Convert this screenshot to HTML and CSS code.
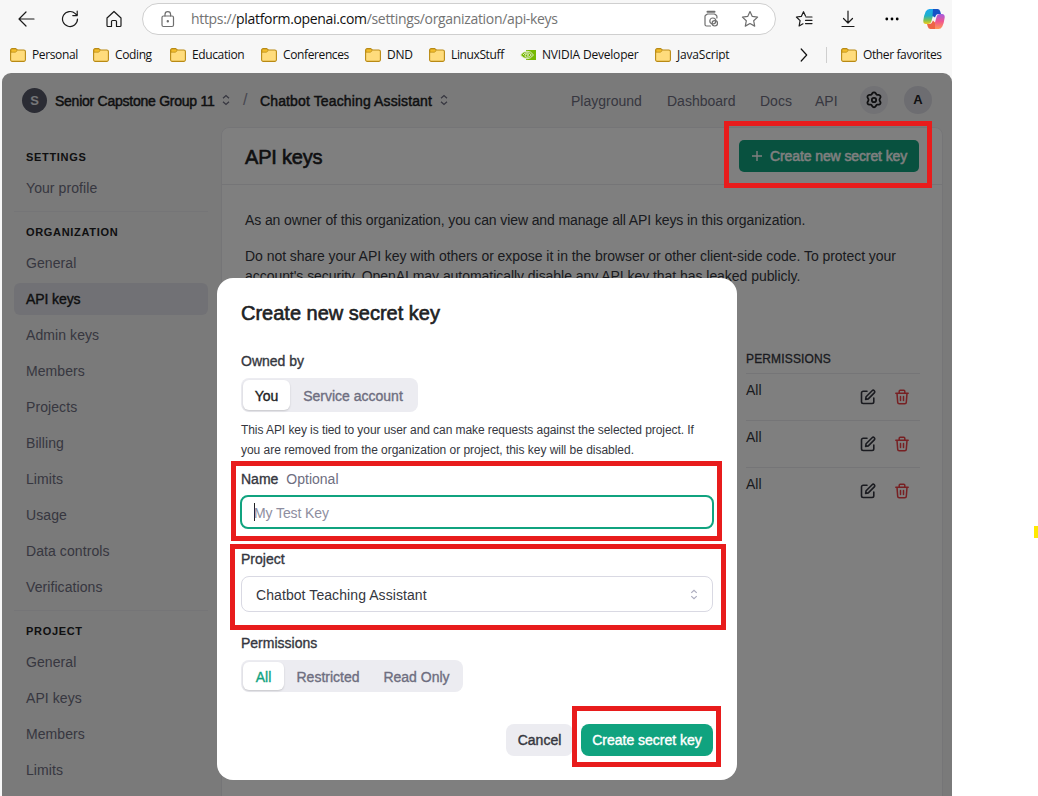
FILE: index.html
```html
<!DOCTYPE html>
<html lang="en">
<head>
<meta charset="utf-8">
<title>API keys</title>
<link rel="stylesheet" href="styles.css">
</head>
<body>
<svg class="defs" width="0" height="0">
  <defs>
    <symbol id="folder" viewBox="0 0 16 16"><path d="M.6 3.200a1.600 1.600 0 0 1 1.600-1.600h3.300l2 1.400h6.300a1.600 1.600 0 0 1 1.600 1.600v8.200a1.600 1.600 0 0 1-1.600 1.600H2.200a1.600 1.600 0 0 1-1.600-1.600z" fill="#ffdc7c" stroke="#b98a14" stroke-width="1.100"/><path d="M1 5.200V3.200q0-1.200 1.200-1.200h3.200l1.700 1.700-1.500 1.500z" fill="#f3bd2c" stroke="#b98a14" stroke-width=".7"/></symbol>
    <symbol id="updown" viewBox="0 0 10 14"><path d="M1.500 5 5 1.800 8.500 5M1.500 9 5 12.200 8.500 9" fill="none" stroke="currentColor" stroke-width="1.500"/></symbol>
    <symbol id="edit" viewBox="0 0 16 16"><path d="M7 2.200H3.200a1.700 1.700 0 0 0-1.700 1.700v8.900a1.700 1.700 0 0 0 1.700 1.700h8.900a1.700 1.700 0 0 0 1.700-1.700V9M5.600 10.400l.5-2.700 6-6a1.500 1.500 0 0 1 2.200 2.200l-6 6z" fill="none" stroke="currentColor" stroke-width="1.600" stroke-linecap="round" stroke-linejoin="round"/></symbol>
    <symbol id="trash" viewBox="0 0 16 16"><path d="M1.800 4.200h12.400M5.200 4V2.300a1 1 0 0 1 1-1h3.600a1 1 0 0 1 1 1V4M3 4.400l.7 9a1.500 1.500 0 0 0 1.500 1.400h5.600a1.500 1.500 0 0 0 1.500-1.400l.7-9M6.500 7.500v4M9.500 7.500v4" fill="none" stroke="currentColor" stroke-width="1.500" stroke-linecap="round"/></symbol>
  </defs>
</svg>
<div class="browser">
  <div class="toolbar">
    <svg class="ic back" viewBox="0 0 18 18"><path d="M17 9H2M9 2 2 9l7 7"/></svg>
    <svg class="ic reload" viewBox="0 0 18 18"><path d="M16.500 9a7.500 7.500 0 1 1-2.200-5.300L16 5.400M16.200 1.200v4.400h-4.400"/></svg>
    <svg class="ic home" viewBox="0 0 18 18"><path d="M2 8 9 1.500 16 8v7.500a1 1 0 0 1-1 1h-3.500v-5a1 1 0 0 0-1-1h-3a1 1 0 0 0-1 1v5H3a1 1 0 0 1-1-1z"/></svg>
    <div class="address">
      <svg class="ic lock" viewBox="0 0 14 17"><rect x="1" y="5" width="11.500" height="10.500" rx="1.500"/><path d="M4 5V3.500a2.800 2.800 0 0 1 5.600 0V5"/><circle cx="6.800" cy="10.300" r=".6" fill="currentColor"/></svg>
      <span class="url">https://<b>platform.openai.com</b>/settings/organization/api-keys</span>
      <svg class="ic tag" viewBox="0 0 16 18"><path d="M7.500 16H3.500A1.500 1.500 0 0 1 2 14.500v-8a1.500 1.500 0 0 1 .6-1.200L4.500 4h7l1.800 1.300a1.500 1.500 0 0 1 .6 1.200V8"/><path d="M4.500 1.800h7" stroke-width="2"/><circle cx="9.800" cy="11" r="3"/><circle cx="11.800" cy="13.300" r="2.700"/></svg>
      <svg class="ic star" viewBox="0 0 18 18"><path d="m9 1.500 2.300 4.900 5.300.7-3.900 3.700 1 5.300L9 13.500l-4.700 2.600 1-5.300L1.400 7.100l5.300-.7z"/></svg>
    </div>
    <svg class="ic favs" viewBox="0 0 18 18"><path d="M10.500 5.900 8.500 1.700 6.300 6.400 1.400 7l3.700 3.700-1 5.300L8 13.800M11 7h6M10.500 10.300H17M10.500 13.600H17"/></svg>
    <svg class="ic download" viewBox="0 0 14 18"><path d="M7 1v12M2.500 8.500 7 13l4.500-4.500M1 16.500h12"/></svg>
    <svg class="dots" viewBox="0 0 14 4"><circle cx="1.800" cy="2" r="1.400"/><circle cx="7" cy="2" r="1.400"/><circle cx="12.200" cy="2" r="1.400"/></svg>
    <svg class="copilot" viewBox="0 0 22 20">
      <defs>
        <linearGradient id="cool" x1="0" y1="0" x2="0" y2="1"><stop offset="0" stop-color="#1ba8f0"/><stop offset=".45" stop-color="#1fb0c8"/><stop offset=".75" stop-color="#7fc254"/><stop offset="1" stop-color="#f4ca19"/></linearGradient>
        <linearGradient id="warm" x1="0" y1="0" x2="0" y2="1"><stop offset="0" stop-color="#a35be0"/><stop offset=".5" stop-color="#f0568f"/><stop offset="1" stop-color="#ff9a55"/></linearGradient>
      </defs>
      <path d="M6.500 0H14Q11.600.8 10.700 4L8.500 12Q7.700 15 5 15H3Q0 15 .3 11.500 1 6 2.700 2.500 4 0 6.500 0z" fill="url(#cool)"/>
      <path d="M10 0h4.500q2 0 2.700 2.200L18 5h-2.700q-2 0-2.700 2L12 8.500 9.500 7z" fill="#1652c5"/>
      <path d="M15.500 20H8q2.400-.8 3.300-4l2.200-8q.8-3 3.500-3h2q3 0 2.700 3.500-.7 5.500-2.400 9-1.300 2.500-3.800 2.500z" fill="url(#warm)"/>
      <path d="M12 20H7.500q-2 0-2.700-2.200L4 15h2.500q2 0 2.700-2l.8-1.500 2 2z" fill="#ed6545"/>
    </svg>
  </div>
  <div class="bookmarks">
    <span class="bm"><svg><use href="#folder"/></svg>Personal</span>
    <span class="bm"><svg><use href="#folder"/></svg>Coding</span>
    <span class="bm"><svg><use href="#folder"/></svg>Education</span>
    <span class="bm"><svg><use href="#folder"/></svg>Conferences</span>
    <span class="bm wide"><svg><use href="#folder"/></svg>DND</span>
    <span class="bm"><svg><use href="#folder"/></svg>LinuxStuff</span>
    <span class="bm wide"><svg viewBox="0 0 16 16"><path d="M6 3h10v10H6z" fill="#76b900"/><path d="M.5 8Q3 4.200 7 4.200T13.500 8Q10.500 11.800 7 11.800T.5 8z" fill="#76b900" stroke="#f7f7f7" stroke-width=".8"/><path d="M3 8q1.500-2.300 4-2.300T11.300 8Q9.500 10.300 7 10.300T5 8q.7-1 2-1t1.800 1q-.8 1-1.800.8" fill="none" stroke="#f7f7f7" stroke-width=".8"/></svg>NVIDIA Developer</span>
    <span class="bm wide"><svg><use href="#folder"/></svg>JavaScript</span>
    <svg class="ic more" viewBox="0 0 8 14"><path d="m1.200 1 5.500 6-5.500 6"/></svg>
    <span class="bm other"><svg><use href="#folder"/></svg>Other favorites</span>
  </div>
  <div class="page">
    <header class="top">
      <span class="org-badge">S</span>
      <span class="crumb">Senior Capstone Group 11</span>
      <svg class="ud"><use href="#updown"/></svg>
      <span class="slash">/</span>
      <span class="crumb proj">Chatbot Teaching Assistant</span>
      <svg class="ud"><use href="#updown"/></svg>
      <nav class="nav"><span class="n1">Playground</span><span class="n2">Dashboard</span><span class="n3">Docs</span><span>API</span></nav>
      <span class="round gear"><svg viewBox="0 0 20 20"><path d="M8.300 2.500a2 2 0 0 1 3.400 0l.6 1a1.200 1.200 0 0 0 1.100.6h1.200a2 2 0 0 1 1.700 3l-.6 1a1.900 1.900 0 0 0 0 1.800l.6 1a2 2 0 0 1-1.700 3h-1.200a1.200 1.200 0 0 0-1.100.6l-.6 1a2 2 0 0 1-3.400 0l-.6-1a1.200 1.200 0 0 0-1.100-.6H5.400a2 2 0 0 1-1.700-3l.6-1a1.900 1.900 0 0 0 0-1.800l-.6-1a2 2 0 0 1 1.700-3h1.200a1.200 1.200 0 0 0 1.100-.6z" transform="translate(0 .8)"/><circle cx="10" cy="10" r="2.200"/></svg></span>
      <span class="round user">A</span>
    </header>
    <div class="body">
      <aside class="side">
        <h3>SETTINGS</h3>
        <a>Your profile</a>
        <h3 class="rule">ORGANIZATION</h3>
        <a>General</a><a class="on">API keys</a><a>Admin keys</a><a>Members</a><a>Projects</a><a>Billing</a><a>Limits</a><a>Usage</a><a>Data controls</a><a>Verifications</a>
        <h3 class="rule">PROJECT</h3>
        <a>General</a><a>API keys</a><a>Members</a><a>Limits</a>
      </aside>
      <main class="card">
        <div class="card-head">
          <h1>API keys</h1>
          <span class="new-key"><svg viewBox="0 0 12 12"><path d="M6 1v10M1 6h10"/></svg>Create new secret key</span>
        </div>
        <p class="p1">As an owner of this organization, you can view and manage all API keys in this organization.</p>
        <p class="p2">Do not share your API key with others or expose it in the browser or other client-side code. To protect your<br>account's security, OpenAI may automatically disable any API key that has leaked publicly.</p>
        <div class="table">
          <div class="th">PERMISSIONS</div>
          <div class="tr"><span>All</span><svg><use href="#edit"/></svg><svg class="del"><use href="#trash"/></svg></div>
          <div class="tr"><span>All</span><svg><use href="#edit"/></svg><svg class="del"><use href="#trash"/></svg></div>
          <div class="tr"><span>All</span><svg><use href="#edit"/></svg><svg class="del"><use href="#trash"/></svg></div>
        </div>
      </main>
    </div>
    <div class="scrim"></div>
  </div>
</div>

<section class="modal">
  <h2>Create new secret key</h2>
  <div class="label">Owned by</div>
  <div class="seg owner"><span class="sel">You</span><span>Service account</span></div>
  <p class="hint"><span class="lead">This API key is tied to your user and can make requests against the selected project. If</span><br>you are removed from the organization or project, this key will be disabled.</p>
  <div class="label name">Name<span>Optional</span></div>
  <div class="input">My Test Key</div>
  <div class="label project">Project</div>
  <div class="select">Chatbot Teaching Assistant<svg><use href="#updown"/></svg></div>
  <div class="label perms">Permissions</div>
  <div class="seg perm"><span class="sel">All</span><span>Restricted</span><span>Read Only</span></div>
  <div class="actions"><span class="btn">Cancel</span><span class="btn go">Create secret key</span></div>
</section>

<div class="mark m1"></div>
<div class="mark m2"></div>
<div class="mark m3"></div>
<div class="mark m4"></div>
<div class="fleck"></div>
</body>
</html>
```
FILE: styles.css
```css
* { box-sizing: border-box; }
body {
  margin: 0; width: 1038px; height: 796px; overflow: hidden; position: relative;
  background: #fff; font: 14px/20px "Liberation Sans", Arial, sans-serif; color: #353740;
}
svg { display: block; flex: none; }
.defs { position: absolute; }
h1, h2, h3, p { margin: 0; font-weight: 400; }
.browser { width: 952px; height: 796px; background: #f7f7f7; display: flex; flex-direction: column; }

.toolbar { height: 38px; display: flex; align-items: center; padding-left: 17px; flex: none; color: #1b1b1b; }
.ic { fill: none; stroke: currentColor; stroke-width: 1.2; stroke-linecap: round; stroke-linejoin: round; }
.back, .reload, .home { width: 18px; height: 18px; }
.reload { margin-left: 26px; }
.home { margin-left: 26px; }
.address {
  width: 634px; height: 32px; margin-left: 19px; border: 1px solid #cfcfcf; border-radius: 16px;
  background: #fff; display: flex; align-items: center; padding-left: 18px; color: #6e6e6e;
}
.lock { width: 14px; height: 17px; }
.url { width: 511px; margin-left: 16px; font: 14px/20px "Open Sans", sans-serif; letter-spacing: -.33px; color: #737373; white-space: nowrap; }
.url b { font-weight: 400; color: #111; }
.tag { width: 16px; height: 18px; margin-left: 1px; }
.star { width: 18px; height: 18px; margin-left: 22px; }
.favs { width: 18px; height: 18px; margin-left: 19px; }
.download { width: 14px; height: 18px; margin-left: 28px; }
.dots { width: 14px; height: 4px; margin-left: 30px; }
.copilot { width: 22px; height: 20px; margin-left: 24px; }

.bookmarks {
  height: 35px; flex: none; display: grid; align-items: center; padding: 0 0 1px 10px; color: #111;
  grid-template-columns: 83px 77px 91px 104px 64px 91px 135px 145px 26px auto;
}
.bm { display: flex; align-items: center; gap: 6px; font: 12px/16px "Open Sans", sans-serif; letter-spacing: -.38px; white-space: nowrap; }
.bm.wide { letter-spacing: -.2px; }
.bm svg { width: 16px; height: 16px; }
.more { width: 8px; height: 14px; }
.other { border-left: 1px solid #cfcfcf; padding-left: 14px; }

.page { position: relative; flex: 1; margin-left: 2px; background: #f4f4f4; border-radius: 9px 9px 0 0; overflow: hidden; }
.scrim { position: absolute; inset: 0; background: rgba(0, 0, 0, .5); }
.top { height: 54px; display: flex; align-items: center; padding-left: 20px; white-space: nowrap; color: #202123; }
.org-badge { width: 25px; height: 25px; border-radius: 50%; background: #565869; color: #ececf1; text-align: center; font: bold 13px/25px "Liberation Sans", sans-serif; }
.crumb { width: 164px; margin-left: 8px; -webkit-text-stroke: .45px; letter-spacing: -.25px; padding-top: 2px; }
.proj { width: 176px; margin-left: 12px; letter-spacing: .13px; }
.ud { width: 10px; height: 12px; margin-left: 2px; color: #6e6e80; }
.proj + .ud { margin-left: 3px; }
.slash { width: 5px; margin-left: 12px; color: #8e8ea0; font-size: 16px; }
.nav { display: flex; margin-left: 122px; width: 289px; color: #6e6e80; padding-top: 2px; }
.n1 { width: 96px; }
.n2 { width: 93px; }
.n3 { width: 55px; }
.round { width: 28px; height: 28px; border-radius: 50%; background: #e4e4ea; display: flex; align-items: center; justify-content: center; }
.gear svg { width: 20px; height: 20px; fill: none; stroke: #202123; stroke-width: 1.8; }
.user { margin-left: 16px; background: #dadae2; font: bold 13px/28px "Liberation Sans", sans-serif; }

.body { display: flex; height: 670px; }
.side { width: 219px; padding: 19px 13px 0 12px; display: flex; flex-direction: column; }
.side h3 { font: bold 11px/22px "Liberation Sans", sans-serif; letter-spacing: .68px; color: #202123; padding-left: 12px; margin-bottom: 4px; height: 22px; flex: none; }
.side .rule { border-top: 1px solid #ebebef; margin-top: 3px; padding-top: 9px; height: 32px; }
.side a { height: 32px; line-height: 33px; padding-left: 12px; margin-bottom: 4px; border-radius: 6px; color: #6e6e80; letter-spacing: .08px; flex: none; }
.side .on { background: #e3e3ea; color: #202123; -webkit-text-stroke: .4px; letter-spacing: -.1px; }
.card { width: 722px; height: 800px; background: #fff; border: 1px solid #ebebef; border-radius: 8px 8px 0 0; }
.card-head { height: 57px; border-bottom: 1px solid #ebebef; padding: 0 23px; display: flex; align-items: center; justify-content: space-between; }
h1 { font-size: 20px; line-height: 28px; color: #202123; -webkit-text-stroke: .6px; letter-spacing: -.2px; padding-top: 2px; }
.new-key { width: 180px; height: 32px; border-radius: 5px; background: #10a37f; color: #fff; display: flex; align-items: center; padding-left: 12px; -webkit-text-stroke: .5px; letter-spacing: -.1px; white-space: nowrap; }
.new-key svg { width: 12px; height: 12px; margin-right: 7px; stroke: #fff; stroke-width: 1.4; }
.card p { padding-left: 23px; white-space: nowrap; }
.card .p1 { margin-top: 25px; letter-spacing: -.11px; }
.card .p2 { margin-top: 16px; letter-spacing: -.045px; }
.table { width: 174px; margin: 62px 0 0 524px; }
.th { height: 26px; font-size: 12px; line-height: 22px; -webkit-text-stroke: .3px; letter-spacing: .15px; border-bottom: 1px solid #ebebef; }
.tr { height: 47px; display: flex; border-bottom: 1px solid #ebebef; }
.tr:last-child { border: 0; }
.tr span { width: 114px; padding-top: 6px; }
.tr svg { width: 16px; height: 16px; margin-top: 15px; }
.tr .del { margin-left: 18px; color: #ef4146; }

.modal { position: absolute; left: 217px; top: 278px; width: 520px; height: 502px; padding: 21px 24px 24px; border-radius: 16px; background: #fff; white-space: nowrap; }
h2 { font-size: 20px; line-height: 28px; color: #202123; -webkit-text-stroke: .6px; }
.label { line-height: 20px; -webkit-text-stroke: .35px; margin-top: 24px; }
.seg { display: flex; padding: 2px; border-radius: 8px; background: #ececf1; color: #6e6e80; -webkit-text-stroke: .35px; }
.seg span { display: flex; align-items: center; justify-content: center; padding-top: 2px; }
.seg .sel { background: #fff; border-radius: 6px; box-shadow: 0 1px 2px rgba(0, 0, 0, .16); color: #202123; }
.owner { width: 177px; height: 34px; margin-top: 7px; }
.owner .sel { width: 47px; }
.owner span + span { width: 126px; }
.hint { font-size: 12px; line-height: 20px; margin-top: 8px; letter-spacing: -.025px; }
.lead { letter-spacing: -.07px; }
.label.name { margin-top: 9px; }
.name span { margin-left: 8px; color: #6e6e80; -webkit-text-stroke: 0; }
.input { width: 474px; height: 34px; margin: 6px 0 0 -1px; border: 2px solid #10a37f; border-radius: 8px; padding: 2px 0 0 12px; color: #8e8ea0; letter-spacing: -.1px; display: flex; align-items: center; }
.input::before { content: ""; width: 1px; height: 18px; margin: -2px -1px 0 0; background: #202123; }
.label.project { margin-top: 20px; }
.select { height: 36px; margin-top: 7px; border: 1px solid #d9d9e3; border-radius: 8px; padding: 2px 14px 0; letter-spacing: .08px; display: flex; align-items: center; justify-content: space-between; }
.select svg { width: 8px; height: 11px; color: #acacbe; margin-top: -2px; }
.label.perms { margin-top: 21px; }
.perm { width: 222px; height: 32px; margin-top: 7px; }
.seg.perm .sel { width: 41px; color: #10a37f; }
.perm span:nth-child(2) { width: 88px; }
.perm span:nth-child(3) { width: 89px; }
.actions { display: flex; justify-content: flex-end; gap: 8px; margin-top: 32px; }
.btn { width: 67px; height: 32px; border-radius: 8px; background: #ececf1; text-align: center; line-height: 32px; -webkit-text-stroke: .4px; }
.go { width: 132px; background: #10a37f; color: #fff; }

.mark { position: absolute; border: 5px solid #e81c1c; }
.m1 { left: 724px; top: 121px; width: 208px; height: 67px; }
.m2 { left: 231px; top: 461px; width: 491px; height: 80px; }
.m3 { left: 230px; top: 544px; width: 496px; height: 86px; }
.m4 { left: 572px; top: 706px; width: 149px; height: 61px; }
.fleck { position: absolute; left: 1034px; top: 526px; width: 4px; height: 12px; background: #ffe900; }
```
